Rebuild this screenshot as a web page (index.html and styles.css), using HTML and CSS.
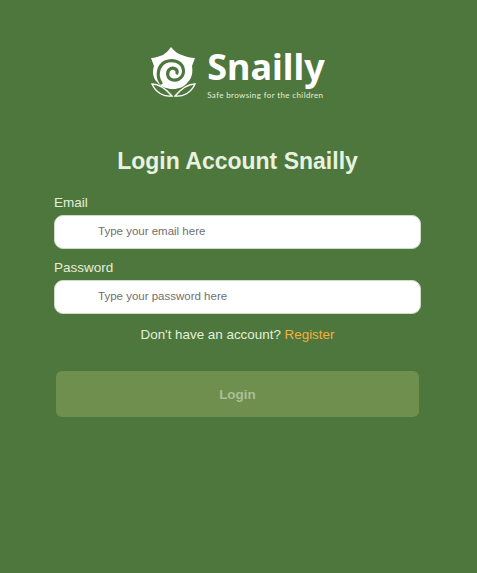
FILE: index.html
```html
<!DOCTYPE html>
<html lang="en">
<head>
    <meta charset="UTF-8">
    <meta name="viewport" content="width=device-width, initial-scale=1.0">
    <title>Login Account Snailly</title>
    <link rel="stylesheet" href="styles.css">
</head>
<body>
    <div class="container">
        <div class="brand">
            <svg class="brand-icon" viewBox="0 0 46 52" aria-hidden="true">
                <path class="petal" d="M21 1 C24 5 28 8 32 9 C36 11 41 12 45 12 C44 15 43 17 42 20 C43 26 42 32 38 36 C34 41 29 43 23 43 C17 43 11 41 7 36 C3 32 2 26 4 20 C3 17 2 15 1 12 C5 12 9 10 13 9 C16 7 19 4 21 1 Z"/>
                <path class="spiral" d="M27 27 C28 23 23 21 20 23 C16 26 17 33 23 34 C30 35 35 29 33 22 C31 15 22 13 15 16 C8 20 6 30 11 37"/>
                <path class="leaf" d="M2 38 C9 38 16 43 22 50 C14 51 6 47 2 38 Z"/>
                <path class="leaf" d="M45 38 C38 38 31 43 25 50 C33 51 41 47 45 38 Z"/>
            </svg>
            <div class="brand-text">
                <div class="brand-name">Snailly</div>
                <div class="brand-tagline">Safe browsing for the children</div>
            </div>
        </div>

        <h1 class="title">Login Account Snailly</h1>

        <form class="login-form">
            <label class="field-label" for="email">Email</label>
            <input class="field-input" id="email" type="text" placeholder="Type your email here">

            <label class="field-label" for="password">Password</label>
            <input class="field-input" id="password" type="password" placeholder="Type your password here">

            <p class="register">Don't have an account? <a href="#">Register</a></p>

            <button class="login-button" type="button" disabled>Login</button>
        </form>
    </div>
</body>
</html>
```

FILE: styles.css
```css
body {
    background: #4e773d;
    margin: 0;
    font-family: 'Liberation Sans', Arial, sans-serif;
    min-height: 100vh;
    color: #e4efd8;
}

.container {
    padding: 46px 56px 0 54px;
}

.brand {
    display: flex;
    justify-content: center;
    align-items: flex-start;
    gap: 11px;
    height: 52px;
}

.brand-icon {
    width: 46px;
    height: 52px;
    flex-shrink: 0;
}

.petal {
    fill: #fff;
}

.spiral {
    fill: none;
    stroke: #4e773d;
    stroke-width: 3.2;
    stroke-linecap: round;
}

.leaf {
    fill: #4e773d;
    stroke: #fff;
    stroke-width: 1.4;
}

.brand-text {
    color: #fff;
}

.brand-name {
    font-family: 'Noto Sans', sans-serif;
    font-weight: 700;
    font-size: 36px;
    line-height: 42px;
}

.brand-tagline {
    font-family: 'Lato', sans-serif;
    font-size: 8px;
    line-height: 10px;
    margin-top: 2px;
    letter-spacing: 0.38px;
    color: #e4efd8;
}

.title {
    text-align: center;
    font-size: 23px;
    line-height: 28px;
    margin: 49px 0 19px;
    color: #e8f2e0;
}

.login-form {
    display: flex;
    flex-direction: column;
}

.field-label {
    font-size: 13.5px;
    line-height: 16px;
    padding-top: 1px;
    margin-bottom: 4px;
}

.field-input {
    height: 34px;
    box-sizing: border-box;
    border: 1px solid #cfdcc8;
    border-radius: 9px;
    background: #fff;
    padding: 0 0 2px 43px;
    margin-bottom: 10px;
    font-family: inherit;
    font-size: 11.5px;
    outline: none;
}

.field-input::placeholder {
    color: #6f6f6f;
    opacity: 1;
}

.register {
    text-align: center;
    font-size: 13.4px;
    line-height: 16px;
    margin: 3px 0 28px;
}

.register a {
    color: #f0b040;
    text-decoration: none;
}

.login-button {
    margin: 0 2px;
    height: 46px;
    border: none;
    border-radius: 6px;
    background: #6f8f4e;
    color: #a9bf97;
    font-family: inherit;
    font-weight: 700;
    font-size: 13.5px;
}
```
